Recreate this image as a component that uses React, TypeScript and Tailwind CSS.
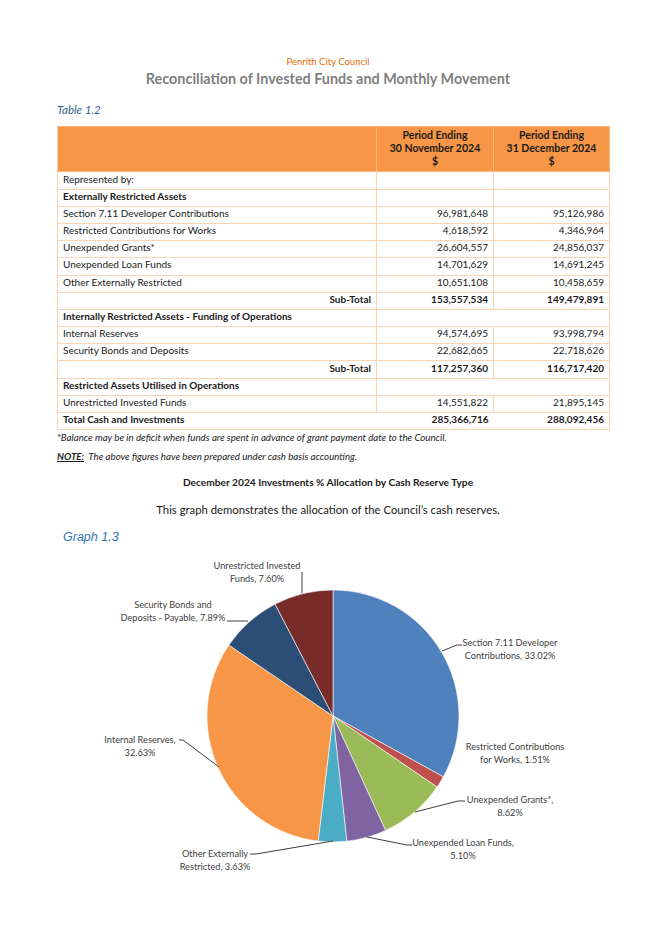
import React from "react";

const font = { fontFamily: "Lato, 'Open Sans', sans-serif" };

type Row = {
  label: string;
  nov?: string;
  dec?: string;
  kind: "plain" | "heading" | "sub" | "merged" | "total";
};

const rows: Row[] = [
  { label: "Represented by:", kind: "plain" },
  { label: "Externally Restricted Assets", kind: "heading" },
  { label: "Section 7.11 Developer Contributions", nov: "96,981,648", dec: "95,126,986", kind: "plain" },
  { label: "Restricted Contributions for Works", nov: "4,618,592", dec: "4,346,964", kind: "plain" },
  { label: "Unexpended Grants*", nov: "26,604,557", dec: "24,856,037", kind: "plain" },
  { label: "Unexpended Loan Funds", nov: "14,701,629", dec: "14,691,245", kind: "plain" },
  { label: "Other Externally Restricted", nov: "10,651,108", dec: "10,458,659", kind: "plain" },
  { label: "Sub-Total", nov: "153,557,534", dec: "149,479,891", kind: "sub" },
  { label: "Internally Restricted Assets - Funding of Operations", kind: "merged" },
  { label: "Internal Reserves", nov: "94,574,695", dec: "93,998,794", kind: "plain" },
  { label: "Security Bonds and Deposits", nov: "22,682,665", dec: "22,718,626", kind: "plain" },
  { label: "Sub-Total", nov: "117,257,360", dec: "116,717,420", kind: "sub" },
  { label: "Restricted Assets Utilised in Operations", kind: "merged" },
  { label: "Unrestricted Invested Funds", nov: "14,551,822", dec: "21,895,145", kind: "plain" },
  { label: "Total Cash and Investments", nov: "285,366,716", dec: "288,092,456", kind: "total" },
];

// pie slices, clockwise from 12 o'clock
const slices = [
  { pct: 33.02, color: "#4f81bd" },
  { pct: 1.51, color: "#c0504d" },
  { pct: 8.62, color: "#9bbb59" },
  { pct: 5.1, color: "#8064a2" },
  { pct: 3.63, color: "#4bacc6" },
  { pct: 32.63, color: "#f79646" },
  { pct: 7.89, color: "#2c4d75" },
  { pct: 7.6, color: "#772c2a" },
];

const CX = 333;
const CY = 161;
const R = 126;

function pt(frac: number) {
  const a = frac * 2 * Math.PI;
  return [CX + R * Math.sin(a), CY - R * Math.cos(a)];
}

function arc(start: number, end: number) {
  const [x1, y1] = pt(start);
  const [x2, y2] = pt(end);
  const large = end - start > 0.5 ? 1 : 0;
  return `M${CX},${CY} L${x1},${y1} A${R},${R} 0 ${large} 1 ${x2},${y2} Z`;
}

// label text: lines, center x, first baseline y (svg coords)
const labels: { lines: string[]; x: number; y: number }[] = [
  { lines: ["Unrestricted Invested", "Funds, 7.60%"], x: 257, y: 14 },
  { lines: ["Security Bonds and", "Deposits - Payable, 7.89%"], x: 173, y: 53 },
  { lines: ["Section 7.11 Developer", "Contributions, 33.02%"], x: 510, y: 91 },
  { lines: ["Restricted Contributions", "for Works, 1.51%"], x: 515, y: 195 },
  { lines: ["Unexpended Grants*,", "8.62%"], x: 510, y: 248 },
  { lines: ["Unexpended Loan Funds,", "5.10%"], x: 463, y: 291 },
  { lines: ["Other Externally", "Restricted, 3.63%"], x: 215, y: 302 },
  { lines: ["Internal Reserves,", "32.63%"], x: 140, y: 188 },
];

const leaders = [
  "302,17 302,38",
  "227,66 248,66",
  "442,96 457,90 462,90",
  "415,257 458,246 465,246",
  "367,282 407,290 412,290",
  "250,299 256,299 333,286",
  "179,185 183,185 219,212",
];

function PieChart() {
  let acc = 0;
  return (
    <svg width={656} height={330} className="block">
      {slices.map((s, i) => {
        const start = acc / 100;
        acc += s.pct;
        const end = acc / 100;
        return <path key={i} d={arc(start, end)} fill={s.color} stroke="#ffffff" strokeWidth={0.6} />;
      })}
      {leaders.map((p, i) => (
        <polyline key={i} points={p} fill="none" stroke="#404040" strokeWidth={1} />
      ))}
      {labels.map((l, i) => (
        <text key={i} textAnchor="middle" fontSize={9.2} fill="#404040" style={font}>
          {l.lines.map((line, j) => (
            <tspan key={j} x={l.x} y={l.y + j * 12.5}>
              {line}
            </tspan>
          ))}
        </text>
      ))}
    </svg>
  );
}

export default function App() {
  const cell = "border border-[#fbd4b4] px-[5px] pb-[4px] h-[17.2px] leading-none";
  return (
    <div className="w-[656px] h-[928px] bg-white text-[#1a1a1a]" style={font}>
      <div className="pt-[57px] flex flex-col items-center">
        <span className="text-[9.5px] text-[#e36c0a] leading-none">Penrith City Council</span>
        <span className="mt-[5px] text-[14.4px] font-bold text-[#7f7f7f] leading-none">
          Reconciliation of Invested Funds and Monthly Movement
        </span>
      </div>

      <div className="px-[57px]">
        <div className="mt-[18px] text-[11.5px] italic text-[#365f91] leading-none">Table 1.2</div>

        <table className="mt-[11px] w-[552px] border-collapse text-[10px] table-fixed">
          <colgroup>
            <col className="w-[319px]" />
            <col className="w-[117px]" />
            <col className="w-[116px]" />
          </colgroup>
          <thead>
            <tr className="bg-[#f79646] h-[45px]">
              <th className="border border-[#fab47a] border-l-[#fbd4b4]" />
              {["30 November 2024", "31 December 2024"].map((d) => (
                <th
                  key={d}
                  className="border border-[#fab47a] font-bold text-center align-top text-[10.5px] leading-[13px] pt-[2px]"
                >
                  Period Ending
                  <br />
                  {d}
                  <br />$
                </th>
              ))}
            </tr>
          </thead>
          <tbody>
            {rows.map((r, i) => {
              if (r.kind === "heading") {
                return (
                  <tr key={i}>
                    <td className={`${cell} font-bold`}>{r.label}</td>
                    <td className={cell} />
                    <td className={cell} />
                  </tr>
                );
              }
              if (r.kind === "merged") {
                return (
                  <tr key={i}>
                    <td className={`${cell} font-bold`}>{r.label}</td>
                    <td className={cell} colSpan={2} />
                  </tr>
                );
              }
              if (r.kind === "sub") {
                return (
                  <tr key={i} className="font-bold">
                    <td className={`${cell} text-right`}>{r.label}</td>
                    <td className={`${cell} text-right`}>{r.nov}</td>
                    <td className={`${cell} text-right`}>{r.dec}</td>
                  </tr>
                );
              }
              if (r.kind === "total") {
                return (
                  <tr key={i} className="font-bold">
                    <td className={`${cell} border-r-0`}>{r.label}</td>
                    <td className={`${cell} border-x-0 text-right`}>{r.nov}</td>
                    <td className={`${cell} border-l-0 text-right`}>{r.dec}</td>
                  </tr>
                );
              }
              return (
                <tr key={i}>
                  <td className={cell}>{r.label}</td>
                  <td className={`${cell} text-right`}>{r.nov ?? ""}</td>
                  <td className={`${cell} text-right`}>{r.dec ?? ""}</td>
                </tr>
              );
            })}
          </tbody>
        </table>

        <p className="mt-[3px] text-[9.7px] italic leading-none text-[#1a1a1a]">
          *Balance may be in deficit when funds are spent in advance of grant payment date to the Council.
        </p>
        <p className="mt-[9px] text-[9.7px] italic leading-none text-[#1a1a1a]">
          <span className="font-bold underline">NOTE:</span>&nbsp; The above figures have been prepared under cash basis accounting.
        </p>
      </div>

      <div className="mt-[15px] text-center text-[10.2px] font-bold leading-none">
        December 2024 Investments % Allocation by Cash Reserve Type
      </div>
      <div className="mt-[17px] text-center text-[11.3px] leading-none">
        This graph demonstrates the allocation of the Council’s cash reserves.
      </div>
      <div
        className="mt-[16px] pl-[63px] text-[12.5px] italic text-[#2e74b5] leading-none"
        style={{ fontFamily: "'Liberation Sans', Arial, sans-serif" }}
      >
        Graph 1.3
      </div>
      <div className="mt-[11px]">
        <PieChart />
      </div>
    </div>
  );
}
